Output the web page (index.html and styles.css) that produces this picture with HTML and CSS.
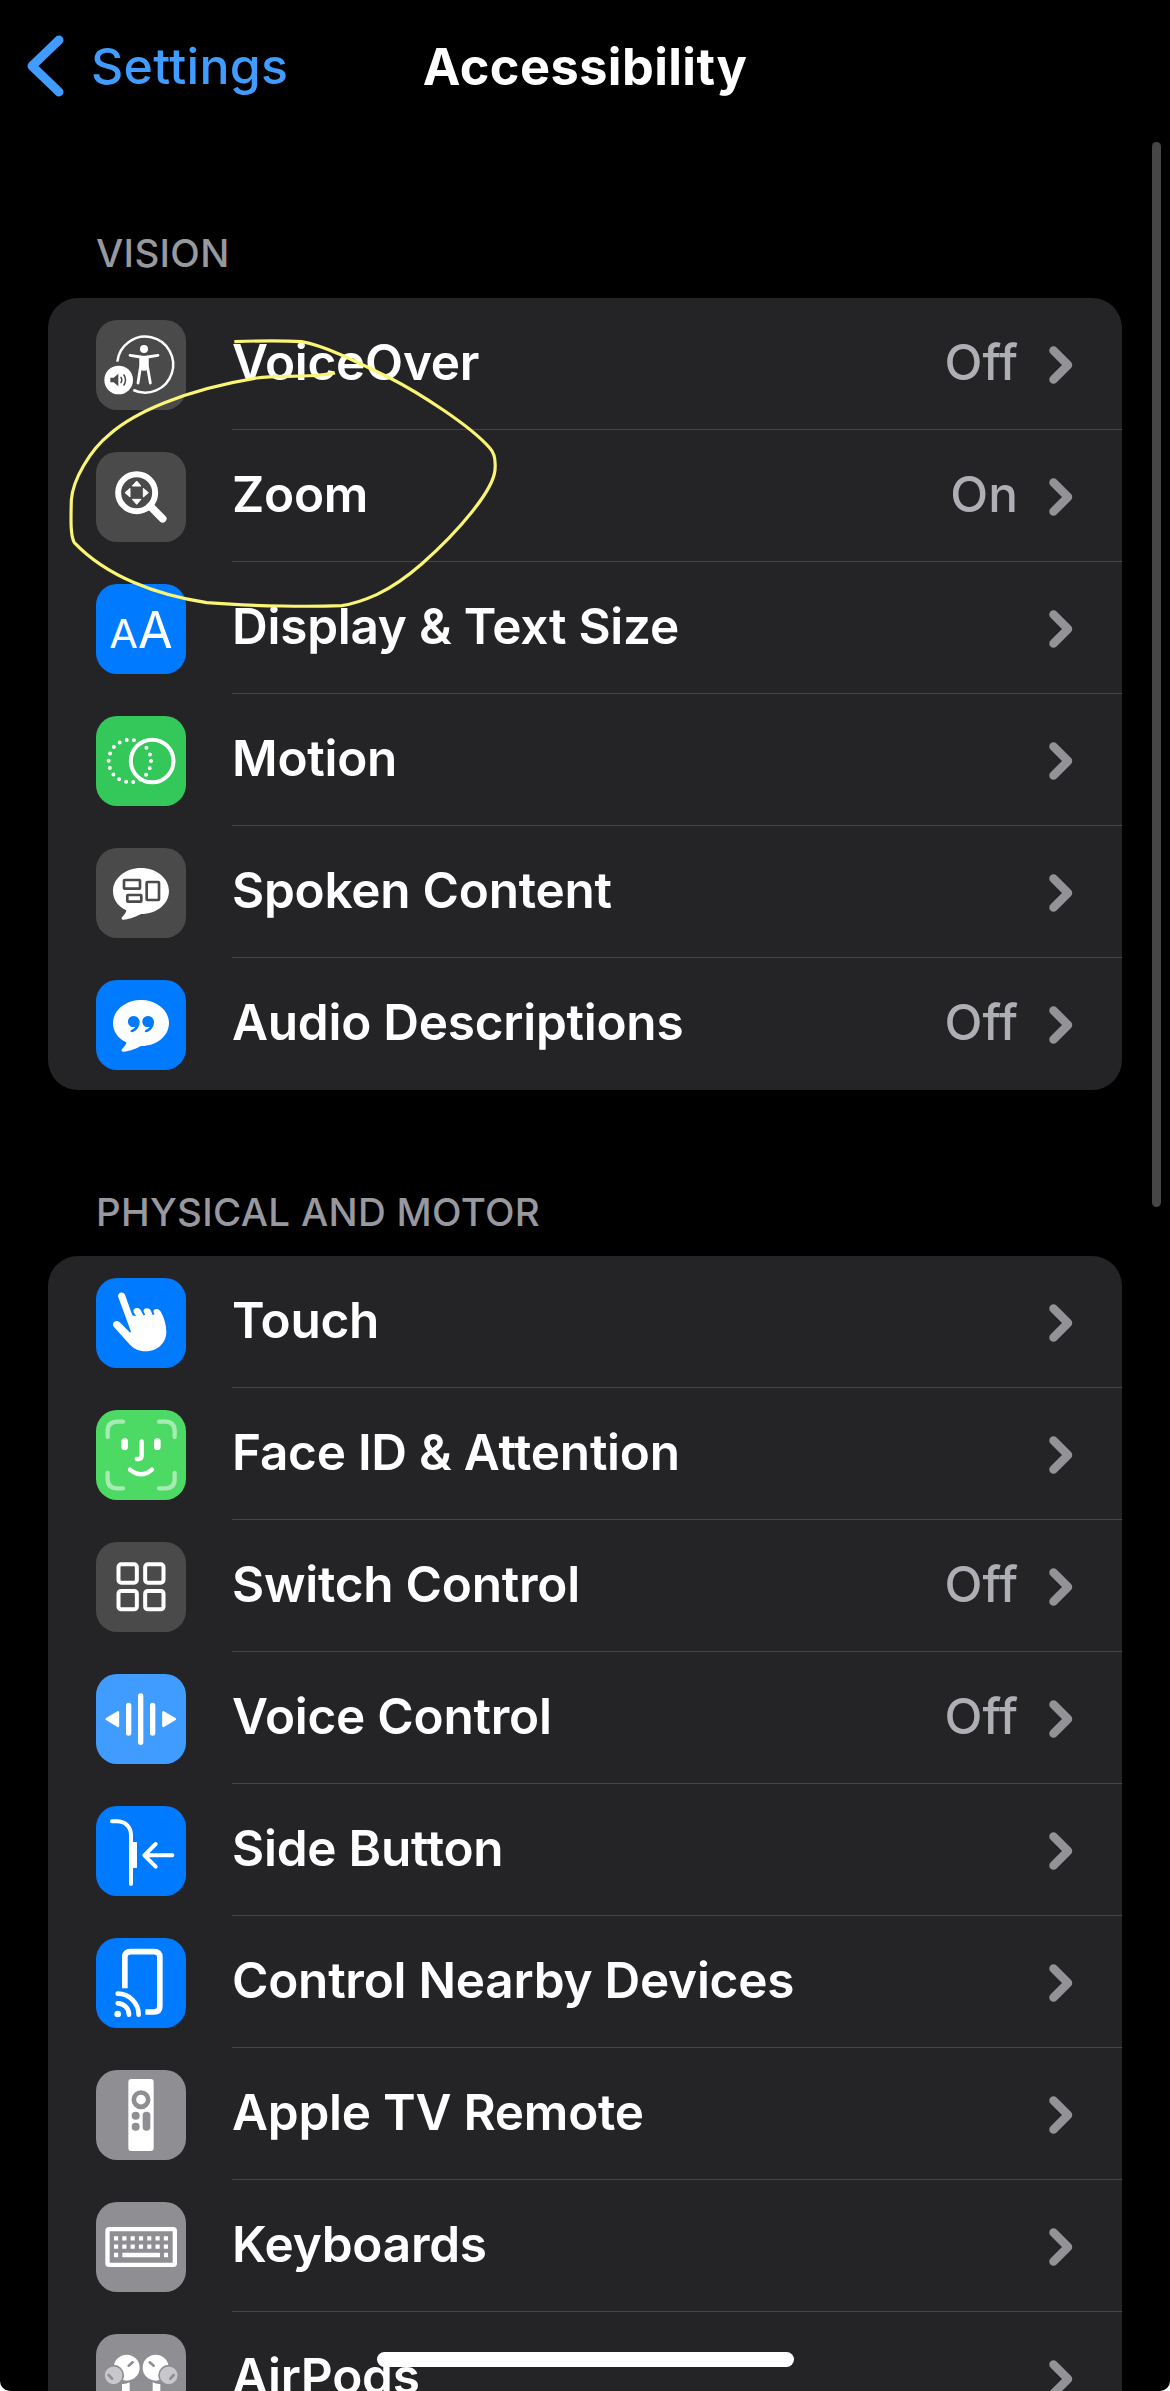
FILE: index.html
```html
<!DOCTYPE html>
<html lang="en">
<head>
  <meta charset="UTF-8">
  <meta name="viewport" content="width=device-width, initial-scale=1.0">
  <title>Accessibility</title>
  <link rel="stylesheet" href="styles.css">
</head>
<body>
  <!-- shared shapes -->
  <svg class="defs" width="0" height="0">
    <symbol id="chevron" viewBox="0 0 24 38">
      <path d="M4.5 4.5L19 19L4.5 33.5" fill="none" stroke="currentColor" stroke-width="8.5" stroke-linecap="round" stroke-linejoin="round"/>
    </symbol>
    <symbol id="bubble" viewBox="0 0 270 270">
      <path d="M135 60C182 60 219 91 219 129C219 167 184 198 135 198C125 203 104 214 82 215C76 215 75 210 79 206C86 200 90 194 91 187C65 175 51 154 51 129C51 91 88 60 135 60Z" fill="#fff"/>
    </symbol>
  </svg>

  <div class="screen">
    <header class="navbar">
      <a class="back" href="#">
        <svg width="40" height="62" viewBox="0 0 40 62"><path d="M33 5L6 31L33 57" fill="none" stroke="currentColor" stroke-width="9" stroke-linecap="round" stroke-linejoin="round"/></svg>
        <span>Settings</span>
      </a>
      <h1>Accessibility</h1>
    </header>

    <h2 class="vision">Vision</h2>
    <ul class="group">
      <li>
        <svg class="icon dark" viewBox="0 0 270 270">
          <path d="M64 125A84 84 0 1 1 112 210" fill="none" stroke="#fff" stroke-width="7.5"/>
          <circle cx="144" cy="87" r="12" fill="#fff"/>
          <path d="M102 106L134 111V138L126 189M186 106L154 111V138L163 189" fill="none" stroke="#fff" stroke-width="8.5" stroke-linecap="round" stroke-linejoin="round"/>
          <path d="M132 107H156V145L149 152H139L132 145Z" fill="#fff"/>
          <circle cx="68" cy="180" r="43" fill="#fff"/>
          <path d="M43 173H53L67 161V199L53 187H43Z" fill="#4a4a4a"/>
          <path d="M75 172Q80 180 75 188M84 165Q93 180 84 195" fill="none" stroke="#4a4a4a" stroke-width="4.5" stroke-linecap="round"/>
        </svg>
        <span class="label">VoiceOver</span><span class="value">Off</span>
        <svg class="chevron"><use href="#chevron"/></svg>
      </li>
      <li>
        <svg class="icon dark" viewBox="0 0 270 270">
          <circle cx="122" cy="122" r="55.5" fill="none" stroke="#fff" stroke-width="18"/>
          <path d="M163 163L200 200" stroke="#fff" stroke-width="23" stroke-linecap="round"/>
          <path d="M122 87L135 102H109ZM122 157L135 142H109ZM87 122L102 109V135ZM157 122L142 109V135Z" fill="#fff" stroke="#fff" stroke-width="3" stroke-linejoin="round"/>
        </svg>
        <span class="label">Zoom</span><span class="value">On</span>
        <svg class="chevron"><use href="#chevron"/></svg>
      </li>
      <li>
        <svg class="icon blue" viewBox="0 0 270 270">
          <text x="40" y="192" font-size="120" textLength="86" lengthAdjust="spacingAndGlyphs">A</text>
          <text x="126" y="192" font-size="154" textLength="104" lengthAdjust="spacingAndGlyphs">A</text>
        </svg>
        <span class="label">Display &amp; Text Size</span>
        <svg class="chevron"><use href="#chevron"/></svg>
      </li>
      <li>
        <svg class="icon green" viewBox="0 0 270 270">
          <circle cx="101.5" cy="135" r="63.5" pathLength="18" fill="none" stroke="#fff" stroke-width="12" stroke-linecap="round" stroke-dasharray="0 1"/>
          <circle cx="168.5" cy="135" r="64" fill="none" stroke="#fff" stroke-width="12"/>
        </svg>
        <span class="label">Motion</span>
        <svg class="chevron"><use href="#chevron"/></svg>
      </li>
      <li>
        <svg class="icon dark" viewBox="0 0 270 270">
          <use href="#bubble"/>
          <g fill="none" stroke="#4a4a4a" stroke-width="8">
            <rect x="84" y="96" width="48" height="26" rx="2"/>
            <rect x="94" y="141" width="42" height="20" rx="2"/>
            <rect x="152" y="102" width="37" height="54" rx="2"/>
          </g>
        </svg>
        <span class="label">Spoken Content</span>
        <svg class="chevron"><use href="#chevron"/></svg>
      </li>
      <li>
        <svg class="icon blue" viewBox="0 0 270 270">
          <use href="#bubble"/>
          <g fill="#007aff">
            <path id="mark" d="M113 108C123 108 131 116 131 127C131 142 120 154 108 157C102 157 102 151 107 149C113 146 117 143 118 140C106 144 96 136 96 125C96 115 103 108 113 108Z"/>
            <use href="#mark" x="43"/>
          </g>
        </svg>
        <span class="label">Audio Descriptions</span><span class="value">Off</span>
        <svg class="chevron"><use href="#chevron"/></svg>
      </li>
    </ul>

    <h2 class="motor">Physical and Motor</h2>
    <ul class="group">
      <li>
        <svg class="icon blue" viewBox="0 0 270 270">
          <path d="M67 58C63 43 82 39 87 50L109 112L120 115C118 108 112 104 112 98C114 88 128 88 134 96L142 112L148 110C144 104 142 101 143 96C146 88 160 89 164 97L170 111L176 109C173 104 171 100 174 95C182 91 190 94 195 102C205 120 211 142 211 162C211 196 183 220 148 220C128 220 112 212 97 195L54 147C45 134 60 122 71 133L101 163C104 164 105 162 104 158Z" fill="#fff"/>
        </svg>
        <span class="label">Touch</span>
        <svg class="chevron"><use href="#chevron"/></svg>
      </li>
      <li>
        <svg class="icon lime" viewBox="0 0 270 270">
          <g fill="none" stroke="#fff" stroke-width="13" stroke-linecap="round">
            <path opacity=".5" d="M35 81V64Q35 35 64 35H81M189 35H208Q236 35 236 64V81M236 189V208Q236 235 208 235H189M81 235H64Q35 235 35 208V189"/>
            <path d="M137 94V138Q137 147 128 147H122M102 179Q135 207 168 179"/>
            <path d="M86 95V110M184 95V110" stroke-width="20"/>
          </g>
        </svg>
        <span class="label">Face ID &amp; Attention</span>
        <svg class="chevron"><use href="#chevron"/></svg>
      </li>
      <li>
        <svg class="icon dark" viewBox="0 0 270 270">
          <g fill="none" stroke="#fff" stroke-width="12">
            <rect x="67.5" y="67" width="55" height="55" rx="8"/>
            <rect x="147.5" y="67" width="55" height="55" rx="8"/>
            <rect x="67.5" y="147" width="55" height="55" rx="8"/>
            <rect x="147.5" y="147" width="55" height="55" rx="8"/>
          </g>
        </svg>
        <span class="label">Switch Control</span><span class="value">Off</span>
        <svg class="chevron"><use href="#chevron"/></svg>
      </li>
      <li>
        <svg class="icon sky" viewBox="0 0 270 270">
          <path d="M134 66V205M98 94V177M170 94V177" stroke="#fff" stroke-width="16" stroke-linecap="round"/>
          <path d="M32 135L66 115V156ZM237 135L202 115V156Z" fill="#fff" stroke="#fff" stroke-width="7" stroke-linejoin="round"/>
        </svg>
        <span class="label">Voice Control</span><span class="value">Off</span>
        <svg class="chevron"><use href="#chevron"/></svg>
      </li>
      <li>
        <svg class="icon blue" viewBox="0 0 270 270">
          <g fill="none" stroke="#fff" stroke-width="12" stroke-linecap="round" stroke-linejoin="round">
            <path d="M48 46H62C90 46 105 64 105 88V234"/>
            <path d="M229 148H146M179 114L145 148L179 182"/>
          </g>
          <rect x="104" y="108" width="19" height="78" rx="2" fill="#fff"/>
        </svg>
        <span class="label">Side Button</span>
        <svg class="chevron"><use href="#chevron"/></svg>
      </li>
      <li>
        <svg class="icon blue" viewBox="0 0 270 270">
          <path d="M86.5 151V58Q86.5 41 104 41H174Q191.5 41 191.5 58V205Q191.5 222 174 222H148" fill="none" stroke="#fff" stroke-width="17"/>
          <path d="M65 167A63 63 0 0 1 128 230M65 196A34 34 0 0 1 99 230" fill="none" stroke="#fff" stroke-width="14" stroke-linecap="round"/>
          <circle cx="65" cy="228" r="10" fill="#fff"/>
        </svg>
        <span class="label">Control Nearby Devices</span>
        <svg class="chevron"><use href="#chevron"/></svg>
      </li>
      <li>
        <svg class="icon gray" viewBox="0 0 270 270">
          <rect x="97" y="27" width="76" height="216" rx="9" fill="#fff"/>
          <circle cx="135" cy="89" r="21.5" fill="none" stroke="#8e8e93" stroke-width="14"/>
          <g fill="#8e8e93">
            <circle cx="119" cy="137" r="12"/>
            <circle cx="119" cy="170" r="12"/>
            <rect x="140" y="125" width="23" height="57" rx="11"/>
          </g>
        </svg>
        <span class="label">Apple TV Remote</span>
        <svg class="chevron"><use href="#chevron"/></svg>
      </li>
      <li>
        <svg class="icon gray" viewBox="0 0 270 270">
          <rect x="34.5" y="81.5" width="202" height="107" rx="5" fill="none" stroke="#fff" stroke-width="13"/>
          <path d="M54 109H216M54 134H216" stroke="#fff" stroke-width="13" stroke-dasharray="12.5 12.4"/>
          <path d="M54 159H66.5M79 159H192M204 159H216" stroke="#fff" stroke-width="13"/>
        </svg>
        <span class="label">Keyboards</span>
        <svg class="chevron"><use href="#chevron"/></svg>
      </li>
      <li>
        <svg class="icon gray" viewBox="0 0 270 270">
          <g id="bud">
            <circle cx="92" cy="101" r="39" fill="#fff"/>
            <circle cx="53" cy="124" r="29" fill="#c7c7cc" stroke="#8e8e93" stroke-width="5"/>
            <path d="M78 150Q90 151 101 145V240H78Z" fill="#fff"/>
            <path d="M98 95L110 85M38 123L48 134" stroke="#8e8e93" stroke-width="8" stroke-linecap="round"/>
          </g>
          <use href="#bud" transform="translate(271 0) scale(-1 1)"/>
        </svg>
        <span class="label">AirPods</span>
        <svg class="chevron"><use href="#chevron"/></svg>
      </li>
    </ul>

    <!-- hand drawn ring around Zoom -->
    <svg class="scribble" viewBox="0 0 1440 1020">
      <path d="M583 155C660 152 720 151 785 155C850 166 940 210 1050 264C1130 305 1290 405 1350 475C1365 490 1367 515 1365 540C1360 600 1260 720 1145 822C1090 870 1050 895 1010 914C970 932 940 942 905 947C820 950 650 950 500 938C350 915 200 860 103 758C90 735 93 680 94 630C98 570 150 480 210 432C280 370 430 300 650 264C720 255 800 265 885 249"/>
    </svg>
    <div class="scrollbar"></div>
    <div class="home-indicator"></div>
  </div>
</body>
</html>
```
FILE: styles.css
```css
* {
  box-sizing: border-box;
}

body {
  margin: 0;
  background-color: #fff;
  font-family: Inter, "Liberation Sans", sans-serif;
}

.defs {
  position: absolute;
}

.screen {
  position: relative;
  height: 2391px;
  padding: 0 48px;
  overflow: hidden;
  background-color: #000;
  border-radius: 0 0 10px 10px;
}

.navbar {
  display: grid;
  grid-template-columns: 1fr auto 1fr;
  align-items: center;
  height: 132px;
  margin: 0 -22px;
}

.back {
  display: flex;
  align-items: center;
  gap: 25px;
  color: #409cff;
  font-size: 50px;
  font-weight: 500;
  letter-spacing: 0.3px;
  text-decoration: none;
}

h1 {
  margin: 0;
  color: #fff;
  font-size: 50.5px;
  font-weight: 700;
  letter-spacing: 0.4px;
}

h2 {
  margin: 0;
  padding-left: 48px;
  color: #98989f;
  font-size: 38.5px;
  font-weight: 500;
  line-height: 48px;
  letter-spacing: 0.3px;
  text-transform: uppercase;
}

.vision {
  padding-top: 97px;
  height: 166px;
}

.motor {
  padding-top: 98px;
  height: 166px;
}

.group {
  margin: 0;
  padding: 0;
  list-style-type: none;
  background-color: #242426;
  border-radius: 30px;
}

.group li {
  position: relative;
  display: flex;
  align-items: center;
  height: 132px;
  padding: 2px 49px 0 48px;
  color: #fff;
  font-size: 49.5px;
  font-weight: 600;
  letter-spacing: -0.25px;
}

/* separator starts at the label */
.group li:not(:last-child)::after {
  content: "";
  position: absolute;
  left: 184px;
  right: 0;
  bottom: 0;
  height: 1px;
  background-color: #464649;
}

.icon {
  width: 90px;
  height: 90px;
  margin-right: 46px;
  border-radius: 21px;
}

.icon text {
  fill: #fff;
  font-weight: 400;
  letter-spacing: 0;
}

.dark { background-color: #4a4a4a; }
.blue { background-color: #007aff; }
.green { background-color: #34c759; }
.lime { background-color: #4cd964; }
.sky { background-color: #409cff; }
.gray { background-color: #8e8e93; }

.label {
  flex: 1;
  margin-top: -7px;
}

.value {
  margin-top: -7px;
  margin-right: 31px;
  color: #aeaeb5;
  font-weight: 550;
  letter-spacing: 0;
}

.chevron {
  width: 24px;
  height: 38px;
  margin-top: -1px;
  color: #929297;
}

.scribble {
  position: absolute;
  left: 40px;
  top: 290px;
  width: 480px;
  height: 340px;
}

.scribble path {
  fill: none;
  stroke: #faf574;
  stroke-width: 9.5;
}

.scrollbar {
  position: absolute;
  top: 142px;
  right: 9px;
  width: 9px;
  height: 1065px;
  background-color: #464646;
  border-radius: 5px;
}

.home-indicator {
  position: absolute;
  bottom: 24px;
  left: 377px;
  width: 417px;
  height: 15px;
  background-color: #fff;
  border-radius: 8px;
}
```
